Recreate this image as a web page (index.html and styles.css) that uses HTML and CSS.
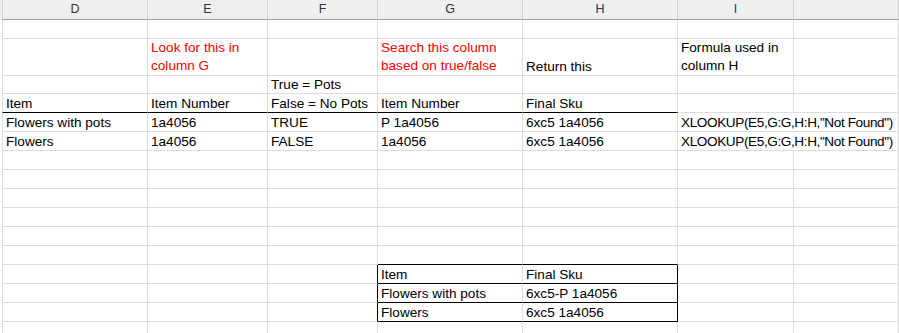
FILE: index.html
```html
<!DOCTYPE html>
<html lang="en">
<head>
  <meta charset="UTF-8" />
  <meta name="viewport" content="width=device-width, initial-scale=1.0" />
  <title>Sku lookup</title>
  <link rel="stylesheet" href="styles.css">
</head>
<body>
  <div class="sheet">
    <div class="row head">
      <div class="cell">D</div>
      <div class="cell">E</div>
      <div class="cell">F</div>
      <div class="cell">G</div>
      <div class="cell">H</div>
      <div class="cell">I</div>
      <div class="cell"></div>
    </div>

    <div class="row">
      <div class="cell"></div><div class="cell"></div><div class="cell"></div><div class="cell"></div><div class="cell"></div><div class="cell"></div><div class="cell"></div>
    </div>

    <!-- notes row, text wraps -->
    <div class="row tall">
      <div class="cell"></div>
      <div class="cell wrap red">Look for this in column G</div>
      <div class="cell"></div>
      <div class="cell wrap red">Search this column based on true/false</div>
      <div class="cell">Return this</div>
      <div class="cell wrap">Formula used in column H</div>
      <div class="cell"></div>
    </div>

    <div class="row">
      <div class="cell"></div>
      <div class="cell"></div>
      <div class="cell">True = Pots</div>
      <div class="cell"></div>
      <div class="cell"></div>
      <div class="cell"></div>
      <div class="cell"></div>
    </div>

    <div class="row">
      <div class="cell under">Item</div>
      <div class="cell under">Item Number</div>
      <div class="cell under">False = No Pots</div>
      <div class="cell under">Item Number</div>
      <div class="cell under">Final Sku</div>
      <div class="cell"></div>
      <div class="cell"></div>
    </div>

    <div class="row">
      <div class="cell">Flowers with pots</div>
      <div class="cell">1a4056</div>
      <div class="cell">TRUE</div>
      <div class="cell">P 1a4056</div>
      <div class="cell">6xc5 1a4056</div>
      <div class="cell span2 formula">XLOOKUP(E5,G:G,H:H,"Not Found")</div>
    </div>

    <div class="row">
      <div class="cell">Flowers</div>
      <div class="cell">1a4056</div>
      <div class="cell">FALSE</div>
      <div class="cell">1a4056</div>
      <div class="cell">6xc5 1a4056</div>
      <div class="cell span2 formula">XLOOKUP(E5,G:G,H:H,"Not Found")</div>
    </div>

    <div class="row"><div class="cell"></div><div class="cell"></div><div class="cell"></div><div class="cell"></div><div class="cell"></div><div class="cell"></div><div class="cell"></div></div>
    <div class="row"><div class="cell"></div><div class="cell"></div><div class="cell"></div><div class="cell"></div><div class="cell"></div><div class="cell"></div><div class="cell"></div></div>
    <div class="row"><div class="cell"></div><div class="cell"></div><div class="cell"></div><div class="cell"></div><div class="cell"></div><div class="cell"></div><div class="cell"></div></div>
    <div class="row"><div class="cell"></div><div class="cell"></div><div class="cell"></div><div class="cell"></div><div class="cell"></div><div class="cell"></div><div class="cell"></div></div>
    <div class="row"><div class="cell"></div><div class="cell"></div><div class="cell"></div><div class="cell"></div><div class="cell"></div><div class="cell"></div><div class="cell"></div></div>

    <!-- result table -->
    <div class="row">
      <div class="cell"></div><div class="cell"></div><div class="cell"></div>
      <div class="cell under"></div>
      <div class="cell under"></div>
      <div class="cell"></div><div class="cell"></div>
    </div>
    <div class="row">
      <div class="cell"></div><div class="cell"></div>
      <div class="cell box-l"></div>
      <div class="cell under">Item</div>
      <div class="cell under box-r">Final Sku</div>
      <div class="cell"></div><div class="cell"></div>
    </div>
    <div class="row">
      <div class="cell"></div><div class="cell"></div>
      <div class="cell box-l"></div>
      <div class="cell under">Flowers with pots</div>
      <div class="cell under box-r">6xc5-P 1a4056</div>
      <div class="cell"></div><div class="cell"></div>
    </div>
    <div class="row">
      <div class="cell"></div><div class="cell"></div>
      <div class="cell box-l"></div>
      <div class="cell under">Flowers</div>
      <div class="cell under box-r">6xc5 1a4056</div>
      <div class="cell"></div><div class="cell"></div>
    </div>
    <div class="row"><div class="cell"></div><div class="cell"></div><div class="cell"></div><div class="cell"></div><div class="cell"></div><div class="cell"></div><div class="cell"></div></div>
  </div>
</body>
</html>
```

FILE: styles.css
```css
body {
  margin: 0;
  background: #fff;
  color: #000;
  font-family: "Liberation Sans", Arial, sans-serif;
  font-size: 13.6px;
  overflow: hidden;
}
.sheet {
  display: flex;
  flex-direction: column;
}
.row {
  display: grid;
  grid-template-columns: 146px 120px 110px 145px 155px 116px 1fr;
  height: 19px;
  padding-left: 2px;
}
.row.tall {
  height: 36px;
}
.cell {
  display: flex;
  align-items: flex-end;
  padding: 0 3px;
  line-height: 17px;
  white-space: nowrap;
  border-right: 1px solid #dcdcdc;
  border-bottom: 1px solid #dcdcdc;
  min-width: 0;
}
.cell:first-child {
  border-left: 1px solid #dcdcdc;
}
.cell.wrap {
  white-space: normal;
  line-height: 18px;
}
.cell.span2 {
  grid-column: 6 / 8;
}
.cell.formula {
  letter-spacing: -0.4px;
}
.red {
  color: #ff0000;
}
/* column letters */
.row.head {
  height: 20px;
  background: #efefef;
}
.head .cell {
  justify-content: center;
  align-items: center;
  font-size: 12.5px;
  color: #333;
  border-right-color: #d2d2d2;
  border-bottom-color: #9e9e9e;
}
.head .cell:first-child {
  border-left-color: #d2d2d2;
}
/* black borders */
.cell.under {
  border-bottom-color: #000;
}
.cell.box-l,
.cell.box-r {
  border-right-color: #000;
}
```
